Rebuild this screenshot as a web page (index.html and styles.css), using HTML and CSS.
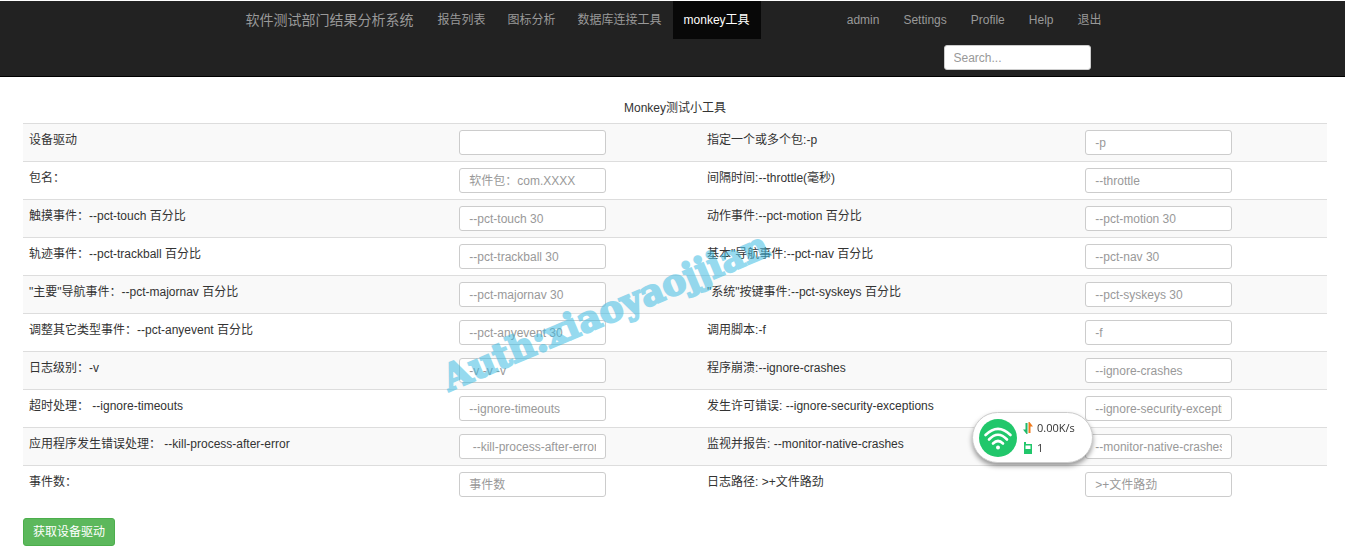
FILE: index.html
```html
<!DOCTYPE html>
<html lang="zh-CN">
<head>
<meta charset="utf-8">
<title>Monkey测试小工具</title>
<link rel="stylesheet" href="styles.css">
</head>
<body>
<header class="navbar">
  <div class="navbar-inner">
    <div class="navbar-row">
      <a class="brand" href="#">软件测试部门结果分析系统</a>
      <nav class="nav">
        <a class="nav-link" href="#">报告列表</a>
        <a class="nav-link" href="#">图标分析</a>
        <a class="nav-link" href="#">数据库连接工具</a>
        <a class="nav-link active" href="#">monkey工具</a>
      </nav>
      <nav class="nav nav-right">
        <a class="nav-link" href="#">admin</a>
        <a class="nav-link" href="#">Settings</a>
        <a class="nav-link" href="#">Profile</a>
        <a class="nav-link" href="#">Help</a>
        <a class="nav-link" href="#">退出</a>
      </nav>
    </div>
    <form class="search">
      <input class="field search-field" type="text" placeholder="Search..." aria-label="Search">
    </form>
  </div>
</header>
<main class="content">
  <table class="options">
    <caption>Monkey测试小工具</caption>
    <colgroup><col class="col-a"><col class="col-b"><col class="col-c"><col class="col-d"></colgroup>
    <tbody>
      <tr>
        <td><label for="device">设备驱动</label></td>
        <td><input class="field" id="device" type="text"></td>
        <td><label for="pkg">指定一个或多个包:-p</label></td>
        <td><input class="field" id="pkg" type="text" placeholder="-p"></td>
      </tr>
      <tr>
        <td><label for="name">包名：</label></td>
        <td><input class="field" id="name" type="text" placeholder="软件包：com.XXXX"></td>
        <td><label for="throttle">间隔时间:--throttle(毫秒)</label></td>
        <td><input class="field" id="throttle" type="text" placeholder="--throttle"></td>
      </tr>
      <tr>
        <td><label for="touch">触摸事件：--pct-touch 百分比</label></td>
        <td><input class="field" id="touch" type="text" placeholder="--pct-touch 30"></td>
        <td><label for="motion">动作事件:--pct-motion 百分比</label></td>
        <td><input class="field" id="motion" type="text" placeholder="--pct-motion 30"></td>
      </tr>
      <tr>
        <td><label for="trackball">轨迹事件：--pct-trackball 百分比</label></td>
        <td><input class="field" id="trackball" type="text" placeholder="--pct-trackball 30"></td>
        <td><label for="navi">基本"导航事件:--pct-nav 百分比</label></td>
        <td><input class="field" id="navi" type="text" placeholder="--pct-nav 30"></td>
      </tr>
      <tr>
        <td><label for="majornav">"主要"导航事件：--pct-majornav 百分比</label></td>
        <td><input class="field" id="majornav" type="text" placeholder="--pct-majornav 30"></td>
        <td><label for="syskeys">"系统"按键事件:--pct-syskeys 百分比</label></td>
        <td><input class="field" id="syskeys" type="text" placeholder="--pct-syskeys 30"></td>
      </tr>
      <tr>
        <td><label for="anyevent">调整其它类型事件：--pct-anyevent 百分比</label></td>
        <td><input class="field" id="anyevent" type="text" placeholder="--pct-anyevent 30"></td>
        <td><label for="script">调用脚本:-f</label></td>
        <td><input class="field" id="script" type="text" placeholder="-f"></td>
      </tr>
      <tr>
        <td><label for="level">日志级别：-v</label></td>
        <td><input class="field" id="level" type="text" placeholder="-v -v -v"></td>
        <td><label for="crashes">程序崩溃:--ignore-crashes</label></td>
        <td><input class="field" id="crashes" type="text" placeholder="--ignore-crashes"></td>
      </tr>
      <tr>
        <td><label for="timeouts">超时处理： --ignore-timeouts</label></td>
        <td><input class="field" id="timeouts" type="text" placeholder="--ignore-timeouts"></td>
        <td><label for="security">发生许可错误: --ignore-security-exceptions</label></td>
        <td><input class="field" id="security" type="text" placeholder="--ignore-security-exceptions"></td>
      </tr>
      <tr>
        <td><label for="kill">应用程序发生错误处理： --kill-process-after-error</label></td>
        <td><input class="field" id="kill" type="text" placeholder=" --kill-process-after-error"></td>
        <td><label for="monitor">监视并报告: --monitor-native-crashes</label></td>
        <td><input class="field" id="monitor" type="text" placeholder="--monitor-native-crashes"></td>
      </tr>
      <tr>
        <td><label for="count">事件数：</label></td>
        <td><input class="field" id="count" type="text" placeholder="事件数"></td>
        <td><label for="log">日志路径: &gt;+文件路劲</label></td>
        <td><input class="field" id="log" type="text" placeholder="&gt;+文件路劲"></td>
      </tr>
    </tbody>
  </table>
  <button class="btn" type="button">获取设备驱动</button>
  <div class="watermark">Auth:xiaoyaojjian</div>
</main>
<aside class="wifi">
  <svg class="wifi-logo" viewBox="0 0 38 38" aria-hidden="true">
    <circle cx="19" cy="19" r="19" fill="#21c76b"/>
    <g fill="none" stroke="#fff" stroke-width="2.6" stroke-linecap="round">
      <path d="M6.500 16Q19 3.500 31.500 16"/>
      <path d="M10 20.500Q19 11 28 20.500"/>
      <path d="M14 24.500Q19 19.500 24 24.500"/>
    </g>
    <circle cx="19" cy="28.500" r="2" fill="#fff"/>
  </svg>
  <div class="wifi-stats">
    <div class="stat">
      <svg class="stat-icon" viewBox="0 0 10 12" aria-hidden="true">
        <path d="M2.500 1h2v11h-1L0 7.500h2.500z" fill="#21b96a"/>
        <path d="M5.500 0h1L10 4.500H7.500V11h-2z" fill="#f07a1c"/>
      </svg>
      <span>0.00K/s</span>
    </div>
    <div class="stat">
      <svg class="stat-icon" viewBox="0 0 10 12" aria-hidden="true">
        <path d="M1 0h2v2h6v10H1zM2.500 3.500v3.500h5V3.500z" fill="#21c76b" fill-rule="evenodd"/>
      </svg>
      <span>1</span>
    </div>
  </div>
</aside>
</body>
</html>
```
FILE: styles.css
```css
* {
  box-sizing: border-box;
}

body {
  margin: 0;
  padding-top: 1px;
  background: #fff;
  color: #333;
  font-family: "Liberation Sans", "Noto Sans CJK SC", sans-serif;
  font-size: 12px;
  line-height: 18px;
}

.navbar {
  background: #222;
  border-bottom: 1px solid #000;
}

.navbar-inner {
  max-width: 880px;
  margin: 0 auto;
}

.navbar-row,
.nav {
  display: flex;
}

.brand {
  padding: 10px 13px;
  color: #999;
  font-size: 14px;
  text-decoration: none;
  white-space: nowrap;
}

.nav-link {
  padding: 10px 11px;
  color: #999;
  text-decoration: none;
  white-space: nowrap;
}

.nav-link.active {
  background: #080808;
  color: #fff;
}

.nav-right {
  gap: 2px;
  margin-left: auto;
}

.search {
  display: flex;
  justify-content: flex-end;
  padding: 6px 22px;
}

.field {
  display: block;
  width: 147px;
  height: 25px;
  padding: 0 9px;
  border: 1px solid #ccc;
  border-radius: 3px;
  background: #fff;
  color: #555;
  font: inherit;
}

.field::placeholder {
  color: #999;
  opacity: 1;
}

.content {
  position: relative;
  padding: 21px 18px 0 23px;
}

.options {
  width: 100%;
  table-layout: fixed;
  border-collapse: separate;
  border-spacing: 0;
  line-height: 20px;
}

.options caption {
  padding-bottom: 5px;
}

.col-a {
  width: 33%;
}

.col-b,
.col-d {
  width: 19%;
}

.col-c {
  width: 29%;
}

.options td {
  padding: 6px;
  border-top: 1px solid #ddd;
  vertical-align: top;
}

.options tr:nth-child(odd) td {
  background: #f9f9f9;
}

.btn {
  display: block;
  height: 28px;
  margin-top: 15px;
  padding: 0 9px;
  border: 1px solid #4cae4c;
  border-radius: 3px;
  background: #5cb85c;
  color: #fff;
  font: inherit;
}

.watermark {
  position: absolute;
  top: 214px;
  left: 45%;
  color: #42bce2;
  font-family: "DejaVu Serif", serif;
  font-size: 36px;
  font-weight: bold;
  line-height: 40px;
  -webkit-text-stroke: 2px #42bce2;
  opacity: 0.55;
  pointer-events: none;
  transform: translateX(-50%) rotate(-23deg);
  white-space: nowrap;
}

.wifi {
  position: fixed;
  right: 252px;
  bottom: 83px;
  display: flex;
  align-items: center;
  gap: 6px;
  width: 121px;
  height: 51px;
  padding: 0 6px;
  border: 1px solid #ccc;
  border-radius: 26px;
  background: #fff;
  box-shadow: 0 3px 5px rgba(0, 0, 0, 0.4);
}

.wifi-logo {
  width: 38px;
  height: 38px;
}

.wifi-stats {
  display: grid;
  gap: 2px;
  font-family: "Open Sans", sans-serif;
  font-size: 11px;
}

.stat {
  display: flex;
  align-items: center;
  gap: 4px;
}

.stat-icon {
  width: 10px;
  height: 12px;
}
```
